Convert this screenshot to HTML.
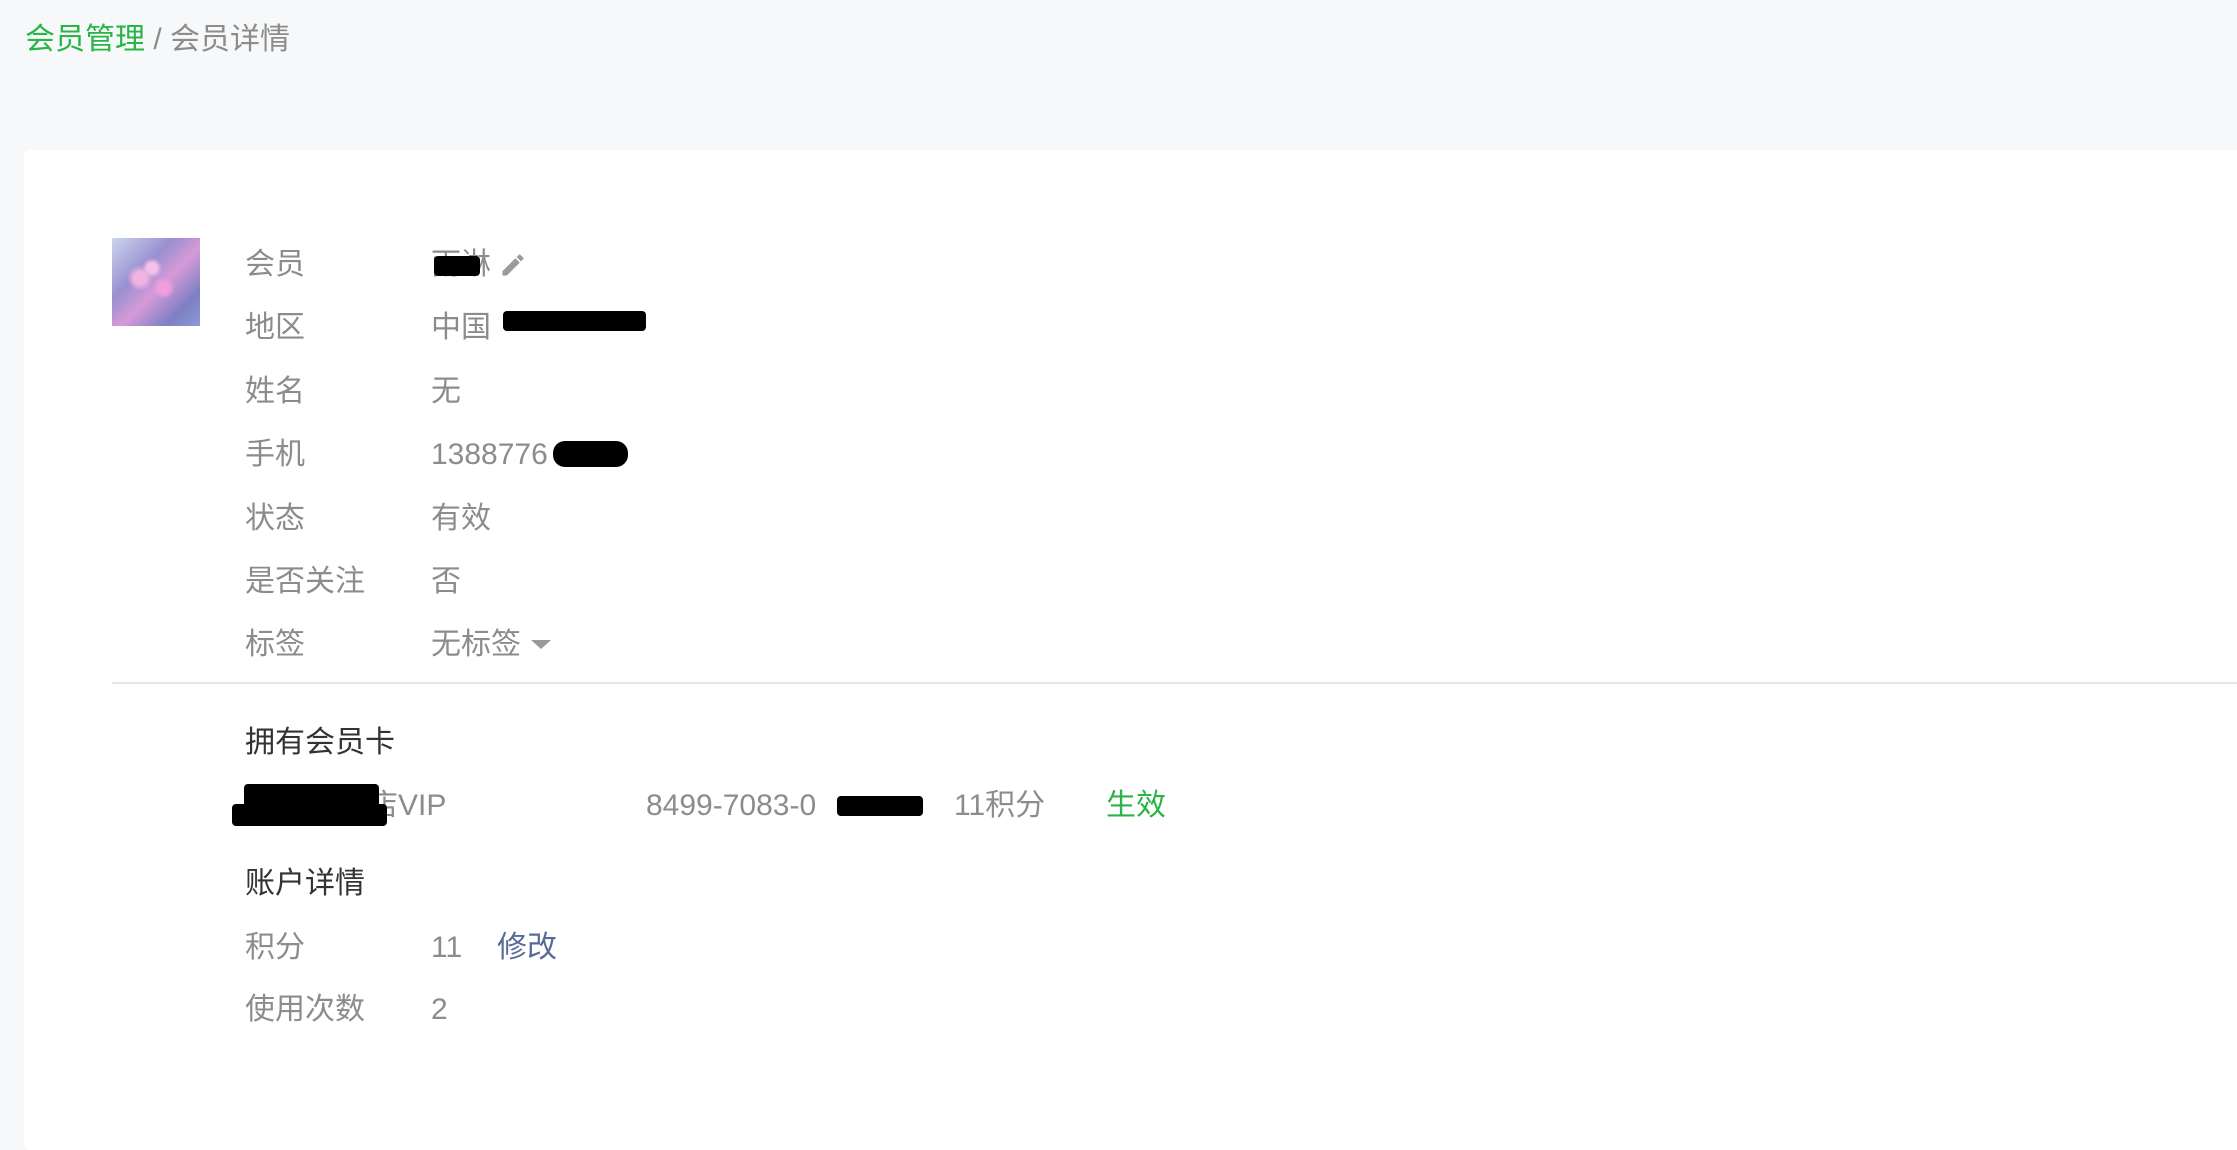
<!DOCTYPE html>
<html><head><meta charset="utf-8">
<style>
*{margin:0;padding:0;box-sizing:border-box}
html,body{width:2237px;height:1068px;overflow:hidden;background:#f7f8fa;font-family:"Liberation Sans","Noto Sans CJK SC",sans-serif}
.t{position:absolute;font-size:30px;line-height:36px;white-space:nowrap;color:#8c8c8c}
.card{position:absolute;left:24px;top:150px;width:2300px;height:1000px;background:#fff;border-radius:6px}
.r{position:absolute;background:#000;border-radius:4px}
</style></head><body>
<div class="t" style="left:25px;top:22px;color:#28b446">会员管理 <span style="color:#8c8c8c">/ 会员详情</span></div>
<div class="card"></div>
<div style="position:absolute;left:112px;top:238px;width:88px;height:88px;background:linear-gradient(135deg,#c9d6ee 0%,#9a8fd0 35%,#d69ad8 55%,#7d80c4 80%,#8a9ad8 100%)">
<div style="position:absolute;left:10px;top:20px;width:60px;height:50px;background:radial-gradient(circle at 30% 40%,#f1b3e3 0 12%,transparent 25%),radial-gradient(circle at 70% 60%,#ee9fdc 0 10%,transparent 22%),radial-gradient(circle at 50% 20%,#f5c0ea 0 10%,transparent 20%)"></div></div>

<div class="t" style="left:245px;top:247px">会员</div>
<div class="t" style="left:431px;top:247px">雨淋</div>
<div class="r" style="left:434px;top:256px;width:46px;height:20px"></div>
<svg style="position:absolute;left:498px;top:251px" width="30" height="28" viewBox="0 0 24 24"><path fill="#9a9a9a" d="M3 17.25V21h3.75L17.8 9.94l-3.75-3.75L3 17.25zM20.7 7.04a1 1 0 000-1.41l-2.34-2.34a1 1 0 00-1.41 0l-1.83 1.83 3.75 3.75 1.83-1.83z"/></svg>

<div class="t" style="left:245px;top:310px">地区</div>
<div class="t" style="left:431px;top:310px">中国</div>
<div class="r" style="left:503px;top:311px;width:143px;height:20px"></div>

<div class="t" style="left:245px;top:374px">姓名</div>
<div class="t" style="left:431px;top:374px">无</div>

<div class="t" style="left:245px;top:437px">手机</div>
<div class="t" style="left:431px;top:437px">1388776</div>
<div class="r" style="left:553px;top:441px;width:75px;height:26px;border-radius:12px"></div>

<div class="t" style="left:245px;top:501px">状态</div>
<div class="t" style="left:431px;top:501px">有效</div>

<div class="t" style="left:245px;top:564px">是否关注</div>
<div class="t" style="left:431px;top:564px">否</div>

<div class="t" style="left:245px;top:627px">标签</div>
<div class="t" style="left:431px;top:627px">无标签</div>
<div style="position:absolute;left:531px;top:640px;width:0;height:0;border-left:10px solid transparent;border-right:10px solid transparent;border-top:9px solid #999"></div>

<div style="position:absolute;left:112px;top:682px;width:2200px;height:2px;background:#e6e7ea"></div>

<div class="t" style="left:245px;top:725px;color:#333">拥有会员卡</div>
<div class="t" style="left:368px;top:788px">店VIP</div>
<div class="r" style="left:244px;top:784px;width:135px;height:24px"></div>
<div class="r" style="left:232px;top:804px;width:155px;height:22px"></div>
<div class="t" style="left:646px;top:788px">8499-7083-0</div>
<div class="r" style="left:837px;top:796px;width:86px;height:20px"></div>
<div class="t" style="left:954px;top:788px">11积分</div>
<div class="t" style="left:1106px;top:788px;color:#28b446">生效</div>

<div class="t" style="left:245px;top:866px;color:#333">账户详情</div>
<div class="t" style="left:245px;top:930px">积分</div>
<div class="t" style="left:431px;top:930px">11</div>
<div class="t" style="left:497px;top:930px;color:#576b95">修改</div>
<div class="t" style="left:245px;top:992px">使用次数</div>
<div class="t" style="left:431px;top:992px">2</div>
</body></html>
